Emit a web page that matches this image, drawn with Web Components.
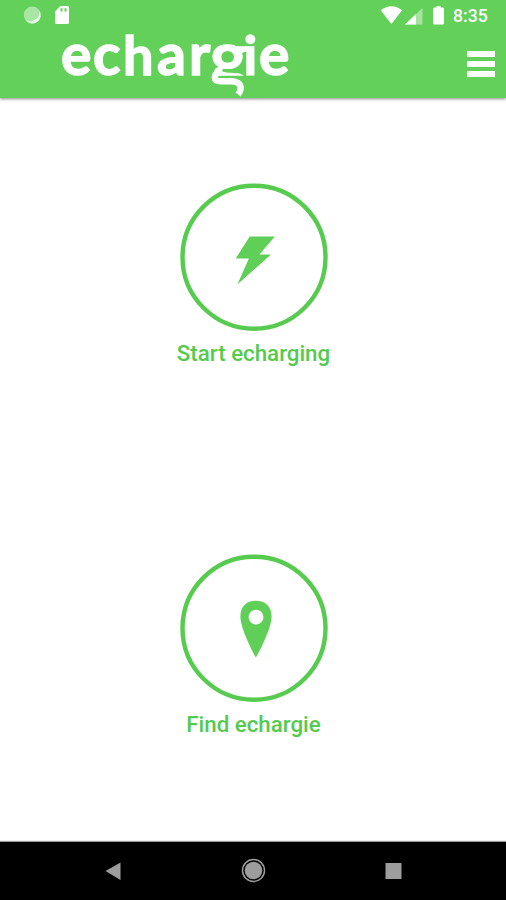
<!DOCTYPE html>
<html lang="en"><head><meta charset="utf-8"><title>echargie</title>
<style>html,body{margin:0;height:100%;background:#fff;font-family:Roboto,sans-serif}</style></head><body>
<app-screen></app-screen>
<script>
const define=(name,html)=>customElements.define(name,class extends HTMLElement{
 constructor(){super();this.attachShadow({mode:'open'}).innerHTML=html}
});
define('status-bar',`<style>
:host{display:flex;height:32px;justify-content:space-between;align-items:stretch;color:#fff}
svg{display:block}.right{display:flex}
.time{width:53px;font:500 17.600px/32px Roboto,sans-serif}</style>
<svg width="100" height="32"><circle cx="32.300" cy="15" r="8.500" fill="#a9e6a3"/><path d="M39.200 10.500A8.300 8.300 0 1 1 25.500 20A9.200 9.200 0 0 0 39.200 10.500Z" fill="#e5f8e3"/>
<path d="M60.500 6H67.500Q69 6 69 7.500V22.500Q69 24 67.500 24H56.500Q55 24 55 22.500V11.500Z" fill="#fff"/><path d="M60.500 8.300h2v3.200h-2zM64.500 8.300h2v3.200h-2z" fill="#63d05a"/></svg>
<div class="right"><svg width="83" height="32" fill="#fff"><path d="M10.700 10.300Q21.400 2 32.100 10.300L21.400 24Z"/><path d="M52.500 8V24.500H35Z" opacity=".42"/><path d="M46 14V24.500H35Z"/><path d="M64.500 7.500h2V6h4v1.500h2q1.500 0 1.500 1.500v14q0 1.500-1.500 1.500h-8q-1.500 0-1.500-1.500v-14q0-1.500 1.500-1.500Z"/></svg><span class="time">8:35</span></div>`);
define('brand-logo',`<style>:host{display:block}svg{display:block;overflow:visible}text{font:700 57px Lato,sans-serif;fill:#fff;stroke:#fff;stroke-width:1.400}.g{font-size:73px;stroke-width:.6}.s{font-size:54px}</style>
<svg width="320" height="66"><text y="42.500"><tspan x="61 93">ec</tspan><tspan class="s" x="123">h</tspan><tspan x="157 189">ar</tspan><tspan class="g" x="209.500" y="50">g</tspan><tspan class="s" x="243.500" y="42.500">i</tspan><tspan x="259">e</tspan></text>
<path d="M208 43.800H255V66H208Z" fill="#63d05a"/>
<path d="M218.500 40C213.500 43 213 49 220 49.300H232C241 50 243 56 238 62.500" fill="none" stroke="#fff" stroke-width="6.400"/></svg>`);
define('menu-button',`<style>:host{display:flex;flex-direction:column;gap:3.700px;width:28px;margin:19.200px 11.500px 0 0}i{height:6.300px;background:#fff}</style><i></i><i></i><i></i>`);
define('app-header',`<style>:host{display:block;height:98px;flex:none;background:#63d05a;box-shadow:0 1px 3px #0007}.row{display:flex;justify-content:space-between;align-items:flex-start;height:66px}</style>
<status-bar></status-bar><div class="row"><brand-logo></brand-logo><menu-button></menu-button></div>`);
define('round-action',`<style>:host{display:flex;flex-direction:column;align-items:center;width:507px}
.label{font:500 22.300px/26px Roboto,sans-serif;color:#55ca4d;margin-top:9px;white-space:nowrap}</style>
<slot name="icon"></slot><span class="label"><slot></slot></span>`);
define('system-nav',`<style>:host{display:block;flex:none;height:58px;background:#000;box-shadow:0 -1px 1px #999}svg{display:block}</style>
<svg width="506" height="58" fill="#9d9d9d"><path d="M105.500 29L120.500 20.500V38Z"/><circle cx="253.500" cy="28.500" r="8.800"/><circle cx="253.500" cy="28.500" r="11" fill="none" stroke="#9d9d9d" stroke-width="1.500"/><path d="M385.500 21h16v16h-16z"/></svg>`);
define('app-screen',`<style>:host{display:flex;flex-direction:column;height:900px;width:506px;overflow:hidden}main{flex:1;display:flex;flex-direction:column;gap:188px;padding-top:85px;box-sizing:border-box}svg{display:block}</style>
<app-header></app-header><main>
<round-action><svg slot="icon" width="148" height="148" viewBox="179.600 183 148 148"><circle cx="253.600" cy="257.200" r="71.500" fill="none" stroke="#57cb4f" stroke-width="4.400"/><path d="M249.300 236.500H274.500L259 254.500H270.500L237 284.500L248.500 258.500H235.300Z" fill="#5fcf57"/></svg>Start echarging</round-action>
<round-action><svg slot="icon" width="148" height="148" viewBox="179.600 554.500 148 148"><circle cx="253.600" cy="628.700" r="71.500" fill="none" stroke="#57cb4f" stroke-width="4.400"/><path fill="#5fcf57" fill-rule="evenodd" d="M255.500 658C253 654 240 629 240 617C240 607 246 601.200 255.500 601.200S271.200 607 271.200 617C271.200 629 258 654 255.500 658ZM255.600 610.200a7.400 7.400 0 1 0 .01 0Z"/></svg>Find echargie</round-action>
</main><system-nav></system-nav>`);
</script></body></html>
